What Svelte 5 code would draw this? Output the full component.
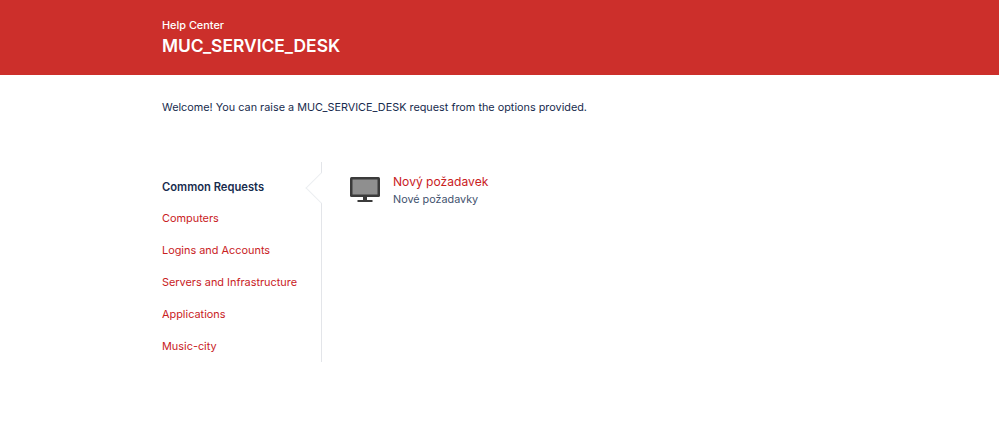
<script>
	const categories = ['Computers', 'Logins and Accounts', 'Servers and Infrastructure', 'Applications', 'Music-city'];
</script>

<header class="banner">
	<div class="wrap">
		<p class="help">Help Center</p>
		<h1>MUC_SERVICE_DESK</h1>
	</div>
</header>

<main class="wrap">
	<p class="welcome">Welcome! You can raise a MUC_SERVICE_DESK request from the options provided.</p>

	<div class="portal">
		<nav class="groups">
			<span class="group active">Common Requests</span>
			{#each categories as name}
				<a class="group" href="#top">{name}</a>
			{/each}
		</nav>

		<div class="requests">
			<svg class="icon" viewBox="0 0 30 25" width="30" height="25" aria-hidden="true">
				<rect x="0" y="0" width="30" height="20" rx="1.5" fill="#3b3b3b" />
				<rect x="2.5" y="2.5" width="25" height="15" fill="#8f8f8f" />
				<rect x="13" y="20" width="4" height="3" fill="#3b3b3b" />
				<rect x="7.5" y="23" width="15" height="2" fill="#3b3b3b" />
			</svg>
			<div>
				<a class="title" href="#top">Nový požadavek</a>
				<p class="desc">Nové požadavky</p>
			</div>
		</div>
	</div>
</main>

<style>
	:global(body) {
		background: #fff;
		font-family: Inter, 'Liberation Sans', sans-serif;
		color: #172b4d;
	}

	.wrap {
		padding-left: 162px;
	}

	.banner {
		height: 75px;
		box-sizing: border-box;
		padding-top: 17px;
		background: #cc2f2b;
		color: #fff;
	}

	.help {
		margin: 0;
		font-size: 10.9px;
		font-weight: 500;
		line-height: 16px;
	}

	h1 {
		margin: 1px 0 0;
		font-size: 17.4px;
		font-weight: 600;
		line-height: 24px;
	}

	.welcome {
		margin: 0;
		padding-top: 24px;
		font-size: 10.85px;
		line-height: 16px;
	}

	.portal {
		display: flex;
		margin-top: 47px;
	}

	.groups {
		position: relative;
		display: flex;
		flex-direction: column;
		width: 160px;
		height: 200px;
		padding-top: 9px;
		box-sizing: border-box;
		border-right: 1px solid #e3e5e9;
	}

	/* notch pointing at the selected group */
	.groups::after {
		content: '';
		position: absolute;
		top: 14.5px;
		right: -10.5px;
		width: 22px;
		height: 22px;
		box-sizing: border-box;
		background: #fff;
		border-left: 1px solid #eceef1;
		border-bottom: 1px solid #eceef1;
		transform: rotate(45deg);
	}

	.group {
		height: 32px;
		font-size: 10.9px;
		line-height: 32px;
		color: #c9211e;
		text-decoration: none;
	}

	.group.active {
		height: 31px;
		font-size: 11.2px;
		font-weight: 600;
		color: #172b4d;
	}

	.requests {
		display: flex;
		align-items: flex-start;
		gap: 13px;
		padding: 12px 0 0 28px;
	}

	.icon {
		margin-top: 3px;
	}

	.title {
		display: block;
		font-size: 12.1px;
		line-height: 16px;
		color: #c9211e;
		text-decoration: none;
	}

	.desc {
		margin: 2px 0 0;
		font-size: 10.8px;
		line-height: 16px;
		color: #42526e;
	}
</style>
